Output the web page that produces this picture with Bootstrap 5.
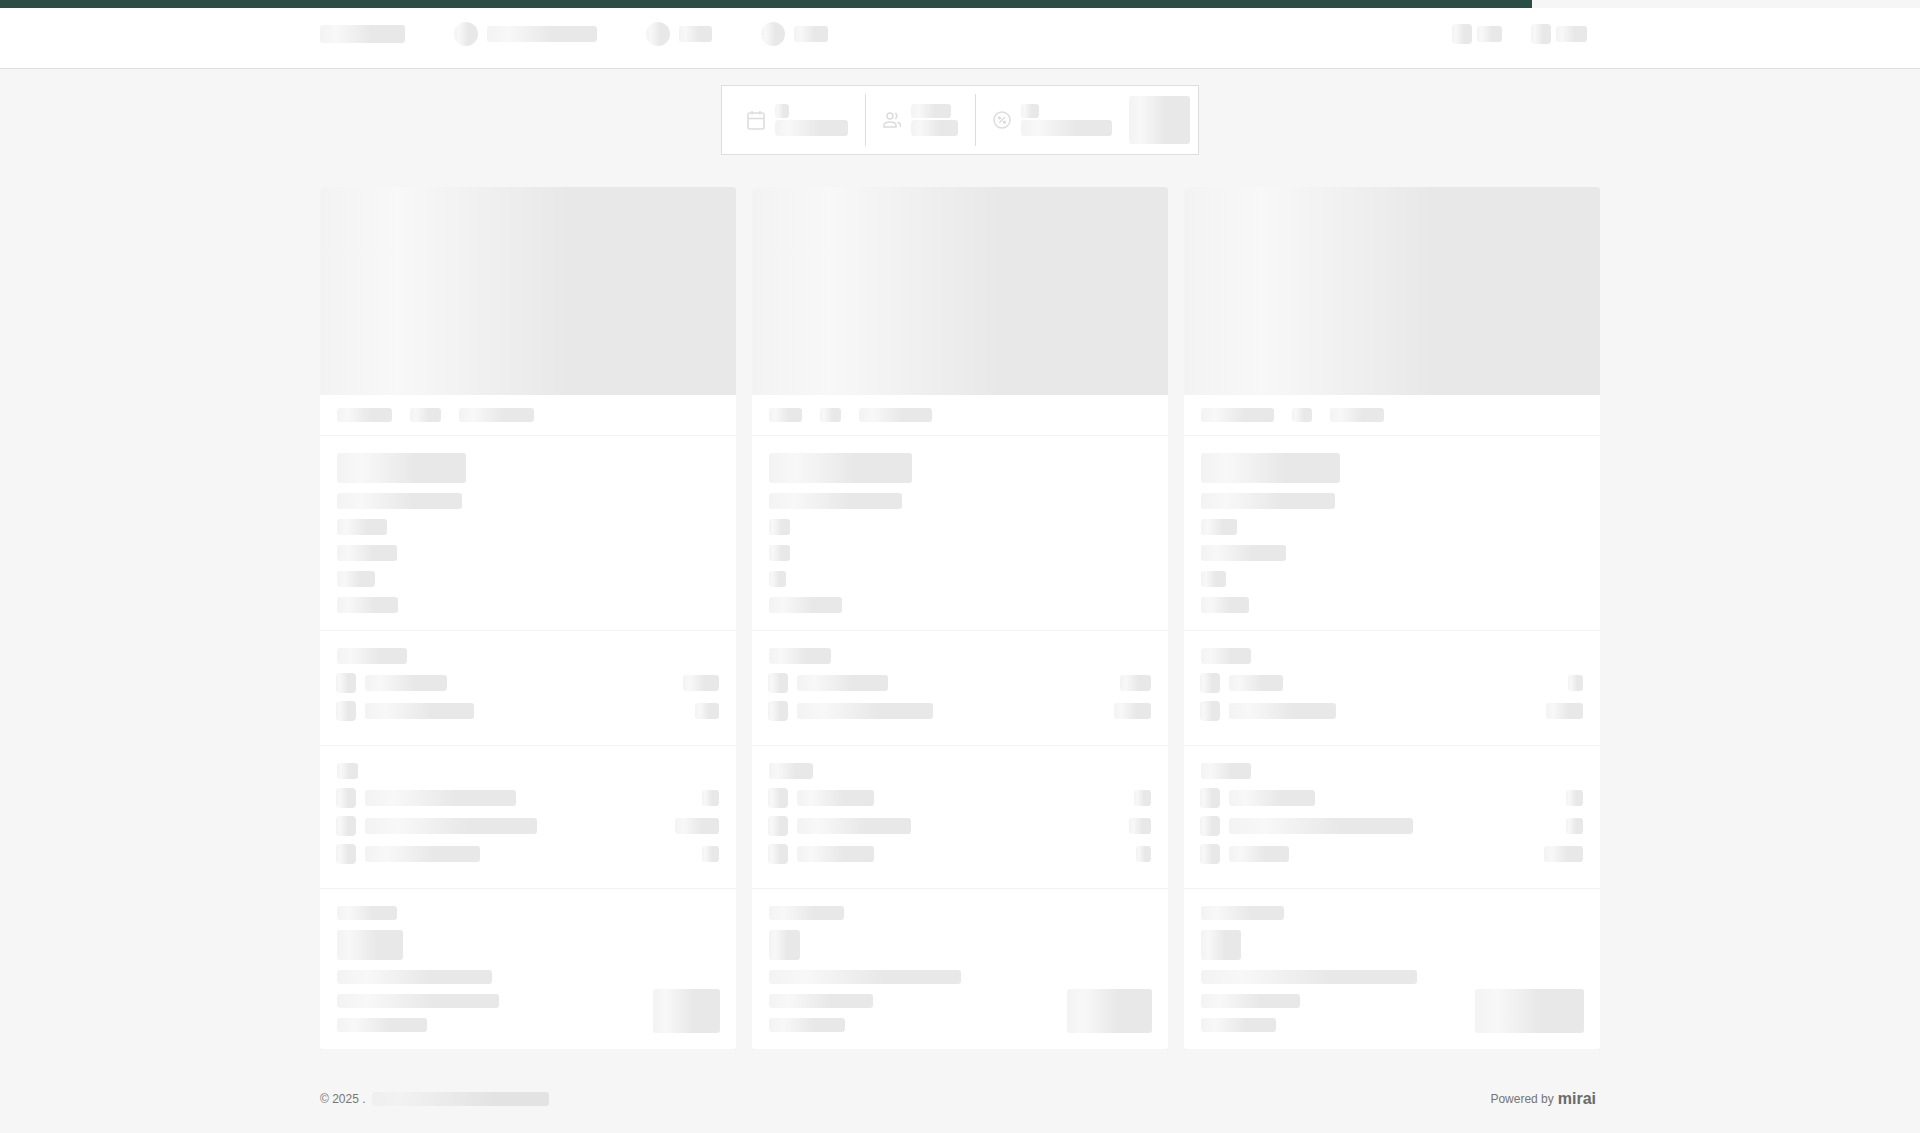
<!DOCTYPE html>
<html lang="en">
  <head>
    <meta charset="UTF-8" />
    <title>Hotel offers</title>
    <link href="https://cdn.jsdelivr.net/npm/bootstrap@5.3.0/dist/css/bootstrap.min.css" rel="stylesheet" />
    <style>
      body {
        background-color: #f6f6f6;
        font-family: "Liberation Sans", Arial, sans-serif;
      }

      .load-track {
        height: 8px;
      }

      .load-fill {
        width: 1532px;
        height: 8px;
        background-color: #2a4d45;
      }

      .page-wrap {
        width: 1280px;
        margin: 0 auto;
      }

      /* skeleton blocks */
      .skel {
        display: block;
        flex: none;
        height: 16px;
        border-radius: 3px;
        background: linear-gradient(90deg, #f3f3f3 0%, #f8f8f8 19%, #e8e8e8 60%, #e8e8e8 100%);
      }

      .skel-14 {
        height: 14px;
      }

      .skel-18 {
        height: 18px;
      }

      .skel-30 {
        height: 30px;
      }

      .skel-icon {
        width: 20px;
        height: 20px;
        border-radius: 4px;
      }

      .skel-round {
        width: 24px;
        height: 24px;
        border-radius: 50%;
      }

      .gap-top {
        margin-top: 10px;
      }

      .top-head {
        height: 61px;
        background-color: #fff;
        border-bottom: 1px solid #ddd;
        padding-bottom: 8px;
      }

      .nav-left {
        gap: 49px;
      }

      .nav-item-skel {
        gap: 9px;
      }

      .nav-right {
        gap: 29px;
        margin-right: 13px;
      }

      .nav-right-item {
        gap: 5px;
      }

      .search-bar {
        width: 478px;
        height: 70px;
        margin: 16px auto 32px;
        background-color: #fff;
        border: 1px solid #ddd;
        padding: 0 8px 0 25px;
      }

      .search-item {
        height: 52px;
        gap: 10px;
      }

      .search-sep {
        width: 1px;
        height: 52px;
        margin: 0 17px;
        background-color: #ddd;
      }

      .search-item svg {
        flex: none;
        color: #dcdcdc;
      }

      .search-top {
        margin-bottom: 2px;
      }

      .offer-card {
        border: 0;
        border-radius: 3px;
        overflow: hidden;
      }

      .offer-img {
        height: 208px;
        border-radius: 0;
      }

      .offer-sec {
        padding: 17px 17px 24px;
        border-bottom: 1px solid #f2f2f2;
      }

      .offer-chips {
        height: 41px;
        padding: 13px 17px;
        gap: 18px;
      }

      .offer-desc {
        height: 195px;
        padding-bottom: 0;
      }

      .offer-price {
        height: 160px;
        border-bottom: 0;
        padding-bottom: 17px;
      }

      .offer-btn {
        height: 44px;
        margin: 0 -1px -1px 0;
      }

      .sec-title {
        margin-bottom: 9px;
      }

      .line-row {
        height: 20px;
        margin-bottom: 8px;
      }

      .line-row:last-child {
        margin-bottom: 0;
      }

      .line-icon {
        margin: 0 9px 0 -1px;
      }

      .site-foot {
        margin-top: 38px;
        font-size: 12px;
        color: #757575;
      }

      .foot-bar {
        margin-left: 6px;
        background: linear-gradient(90deg, #efefef 0%, #f2f2f2 15%, #e3e3e3 70%, #e3e3e3 100%);
      }

      .brand-word {
        font-size: 16px;
        font-weight: 700;
        color: #6a6a6a;
      }
    </style>
  </head>
  <body>
    <div class="load-track"><div class="load-fill"></div></div>

    <header class="top-head d-flex align-items-center">
      <div class="page-wrap d-flex justify-content-between align-items-center">
        <div class="d-flex align-items-center nav-left">
          <span class="skel skel-18" style="width: 85px"></span>
          <div class="d-flex align-items-center nav-item-skel"><span class="skel skel-round"></span><span class="skel" style="width: 110px"></span></div>
          <div class="d-flex align-items-center nav-item-skel"><span class="skel skel-round"></span><span class="skel" style="width: 33px"></span></div>
          <div class="d-flex align-items-center nav-item-skel"><span class="skel skel-round"></span><span class="skel" style="width: 34px"></span></div>
        </div>
        <div class="d-flex align-items-center nav-right">
          <div class="d-flex align-items-center nav-right-item"><span class="skel skel-icon"></span><span class="skel" style="width: 25px"></span></div>
          <div class="d-flex align-items-center nav-right-item"><span class="skel skel-icon"></span><span class="skel" style="width: 31px"></span></div>
        </div>
      </div>
    </header>

    <div class="search-bar d-flex align-items-center">
      <div class="search-item d-flex align-items-center">
        <svg width="18" height="20" viewBox="0 0 18 20" fill="none" stroke="currentColor" stroke-width="1.500"><rect x="1" y="3" width="16" height="16" rx="1.500"/><path d="M1 8.500h16M5 1v3.500M13 1v3.500"/></svg>
        <div class="d-flex flex-column">
          <span class="skel skel-14 search-top" style="width: 14px"></span>
          <span class="skel" style="width: 73px"></span>
        </div>
      </div>
      <div class="search-sep"></div>
      <div class="search-item d-flex align-items-center">
        <svg width="18" height="16" viewBox="0 0 18 16" fill="none" stroke="currentColor" stroke-width="1.500"><circle cx="7" cy="4" r="3"/><path d="M1 15v-1.500C1 11 3 10 7 10s6 1 6 3.500V15zM12 1.200a3 3 0 0 1 0 5.600M14.500 10.300c2 .5 3 1.500 3 3.200V15"/></svg>
        <div class="d-flex flex-column">
          <span class="skel skel-14 search-top" style="width: 40px"></span>
          <span class="skel" style="width: 47px"></span>
        </div>
      </div>
      <div class="search-sep"></div>
      <div class="search-item d-flex align-items-center">
        <svg width="18" height="18" viewBox="0 0 18 18" fill="none" stroke="currentColor" stroke-width="1.500"><circle cx="9" cy="9" r="8"/><path d="M6.200 11.800l5.600-5.600"/><circle cx="6.500" cy="6.800" r=".9"/><circle cx="11.500" cy="11.200" r=".9"/></svg>
        <div class="d-flex flex-column">
          <span class="skel skel-14 search-top" style="width: 18px"></span>
          <span class="skel" style="width: 91px"></span>
        </div>
      </div>
      <span class="skel ms-auto" style="width: 61px; height: 48px"></span>
    </div>

    <main class="page-wrap">
      <div class="row g-3" id="offers"></div>

      <footer class="site-foot d-flex justify-content-between align-items-center pe-1">
        <div class="d-flex align-items-center"><span>© 2025 .</span><span class="skel skel-14 foot-bar" style="width: 177px"></span></div>
        <div class="d-flex align-items-center gap-1"><span>Powered by</span><span class="brand-word">mirai</span></div>
      </footer>
    </main>

    <script src="https://cdn.jsdelivr.net/npm/bootstrap@5.3.0/dist/js/bootstrap.bundle.min.js"></script>
    <script>
      // widths of the placeholder bars, one entry per card
      const offers = [
        {
          chips: [55, 31, 75],
          desc: [129, 125, 50, 60, 38, 61],
          incl: { title: 70, rows: [[82, 36], [109, 24]] },
          extras: { title: 21, rows: [[151, 17], [172, 44], [115, 17]] },
          price: { title: 60, big: 66, lines: [155, 162, 90], btn: 67 },
        },
        {
          chips: [33, 21, 73],
          desc: [143, 133, 21, 21, 17, 73],
          incl: { title: 62, rows: [[91, 31], [136, 37]] },
          extras: { title: 44, rows: [[77, 17], [114, 22], [77, 15]] },
          price: { title: 75, big: 31, lines: [192, 104, 76], btn: 85 },
        },
        {
          chips: [73, 20, 54],
          desc: [139, 134, 36, 85, 25, 48],
          incl: { title: 50, rows: [[54, 15], [107, 37]] },
          extras: { title: 50, rows: [[86, 17], [184, 17], [60, 39]] },
          price: { title: 83, big: 40, lines: [216, 99, 75], btn: 109 },
        },
      ];

      function bar(width, extra = "") {
        return `<span class="skel ${extra}" style="width: ${width}px"></span>`;
      }

      function lineRows(rows) {
        return rows
          .map(
            (r) => `
            <div class="line-row d-flex align-items-center">
              <span class="skel skel-icon line-icon"></span>
              ${bar(r[0])}
              <span class="skel ms-auto" style="width: ${r[1]}px"></span>
            </div>`
          )
          .join("");
      }

      document.getElementById("offers").innerHTML = offers
        .map(
          (o) => `
          <div class="col-4">
            <div class="card offer-card">
              <span class="skel offer-img w-100"></span>
              <div class="offer-sec offer-chips d-flex">${o.chips.map((w) => bar(w, "skel-14")).join("")}</div>
              <div class="offer-sec offer-desc d-flex flex-column">
                ${bar(o.desc[0], "skel-30")}
                ${o.desc.slice(1).map((w) => bar(w, "gap-top")).join("")}
              </div>
              <div class="offer-sec">${bar(o.incl.title, "sec-title")}${lineRows(o.incl.rows)}</div>
              <div class="offer-sec">${bar(o.extras.title, "sec-title")}${lineRows(o.extras.rows)}</div>
              <div class="offer-sec offer-price d-flex justify-content-between align-items-end">
                <div class="d-flex flex-column">
                  ${bar(o.price.title, "skel-14")}
                  ${bar(o.price.big, "skel-30 gap-top")}
                  ${o.price.lines.map((w) => bar(w, "skel-14 gap-top")).join("")}
                </div>
                <span class="skel offer-btn" style="width: ${o.price.btn}px"></span>
              </div>
            </div>
          </div>`
        )
        .join("");
    </script>
  </body>
</html>
